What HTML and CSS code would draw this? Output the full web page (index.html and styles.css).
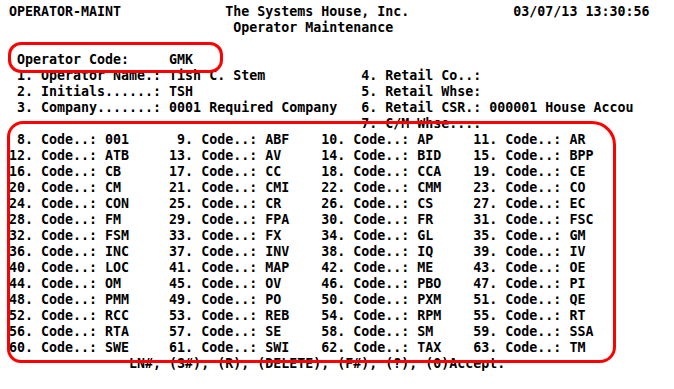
FILE: index.html
```html
<!DOCTYPE html>
<html lang="en">
<head>
    <meta charset="UTF-8">
    <meta name="viewport" content="width=device-width, initial-scale=1.0">
    <title>OPERATOR-MAINT</title>
    <link rel="stylesheet" href="styles.css">
</head>
<body>

    <div class="screen">
<pre class="term">OPERATOR-MAINT             The Systems House, Inc.             03/07/13 13:30:56
                            Operator Maintenance

 Operator Code:     GMK
 1. Operator Name.: Tish C. Stem            4. Retail Co..:
 2. Initials......: TSH                     5. Retail Whse:
 3. Company.......: 0001 Required Company   6. Retail CSR.: 000001 House Accou
                                            7. C/M Whse....
 8. Code..: 001      9. Code..: ABF    10. Code..: AP     11. Code..: AR
12. Code..: ATB     13. Code..: AV     14. Code..: BID    15. Code..: BPP
16. Code..: CB      17. Code..: CC     18. Code..: CCA    19. Code..: CE
20. Code..: CM      21. Code..: CMI    22. Code..: CMM    23. Code..: CO
24. Code..: CON     25. Code..: CR     26. Code..: CS     27. Code..: EC
28. Code..: FM      29. Code..: FPA    30. Code..: FR     31. Code..: FSC
32. Code..: FSM     33. Code..: FX     34. Code..: GL     35. Code..: GM
36. Code..: INC     37. Code..: INV    38. Code..: IQ     39. Code..: IV
40. Code..: LOC     41. Code..: MAP    42. Code..: ME     43. Code..: OE
44. Code..: OM      45. Code..: OV     46. Code..: PBO    47. Code..: PI
48. Code..: PMM     49. Code..: PO     50. Code..: PXM    51. Code..: QE
52. Code..: RCC     53. Code..: REB    54. Code..: RPM    55. Code..: RT
56. Code..: RTA     57. Code..: SE     58. Code..: SM     59. Code..: SSA
60. Code..: SWE     61. Code..: SWI    62. Code..: TAX    63. Code..: TM
               LN#, (S#), (R), (DELETE), (F#), (?), (0)Accept:</pre>

        <!-- red call-outs drawn over the screen -->
        <div class="mark mark-code"></div>
        <div class="mark mark-codes"></div>
    </div>

</body>
</html>
```

FILE: styles.css
```css
* {
    box-sizing: border-box;
    margin: 0;
    padding: 0;
}
body {
    background-color: white;
    width: 674px;
    height: 389px;
    overflow: hidden;
}
.screen {
    position: relative;
    width: 674px;
    height: 389px;
}
.term {
    padding: 4px 0 0 9px;
    font-family: "DejaVu Sans Mono", "Liberation Mono", monospace;
    font-weight: bold;
    font-size: 13.3px;
    line-height: 16px;
    color: #000;
}
.mark {
    position: absolute;
    border: 3px solid #ff0000;
}
.mark-code {
    left: 8px;
    top: 42px;
    width: 215px;
    height: 31px;
    border-radius: 13px;
}
.mark-codes {
    left: 7px;
    top: 121px;
    width: 609px;
    height: 242px;
    border-radius: 16px 24px 16px 14px;
}
```
